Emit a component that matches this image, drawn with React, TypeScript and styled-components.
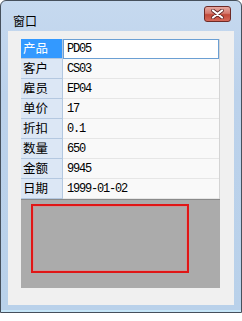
import React from 'react';
import styled, { createGlobalStyle } from 'styled-components';

const Global = createGlobalStyle`
  html, body { margin: 0; padding: 0; background: #ffffff; }
  body { font-family: "Noto Sans CJK SC", sans-serif; }
`;

const Window = styled.div`
  width: 242px;
  height: 313px;
  box-sizing: border-box;
  border: 1px solid #46505c;
  border-radius: 6px 6px 0 0;
  background: linear-gradient(to bottom, #c6d9ef 0%, #bcd2eb 30%, #b9d1ea 100%);
  display: flex;
  flex-direction: column;
  padding: 0 7px 7px 7px;
  box-shadow: inset 0 -2px 0 #c6e6f8;
`;

const TitleBar = styled.div`
  height: 30px;
  display: flex;
  align-items: flex-start;
  justify-content: space-between;
`;

const Title = styled.span`
  margin: 12px 0 0 5px;
  font-size: 12px;
  line-height: 15px;
  color: #000;
  font-family: "Noto Sans CJK SC", sans-serif;
`;

const CloseButton = styled.div`
  margin: 5px 3px 0 0;
  width: 27px;
  height: 16px;
  box-sizing: border-box;
  border: 1px solid #6e2a26;
  border-radius: 3px;
  background: linear-gradient(to bottom, #e6a8a0 0%, #d57a6f 45%, #c24a3a 55%, #d5695a 100%);
  display: flex;
  align-items: center;
  justify-content: center;
`;

const Client = styled.div`
  flex: 1;
  background: #f0f0f0;
  padding: 8px 0 17px 13px;
  display: flex;
  flex-direction: column;
`;

const Grid = styled.div`
  width: 199px;
  display: grid;
  grid-template-columns: 42px 1fr;
  border-right: 1px solid #d4d4d4;
  box-sizing: border-box;
`;

const Label = styled.div<{ $selected?: boolean }>`
  height: 20px;
  box-sizing: border-box;
  border-bottom: 1px solid #b4c8e0;
  border-right: 1px solid #b4c8e0;
  background: ${(p) => (p.$selected ? '#3399ff' : '#dce7f5')};
  color: ${(p) => (p.$selected ? '#ffffff' : '#000000')};
  font-size: 12.5px;
  line-height: 17px;
  padding-left: 2px;
  font-family: "Noto Sans CJK SC", sans-serif;
`;

const Value = styled.div<{ $editing?: boolean }>`
  height: 20px;
  box-sizing: border-box;
  border-bottom: 1px solid ${(p) => (p.$editing ? '#6b9fd3' : '#e6e6e6')};
  border-top: ${(p) => (p.$editing ? '1px solid #6b9fd3' : 'none')};
  border-left: ${(p) => (p.$editing ? '1px solid #6b9fd3' : 'none')};
  border-right: ${(p) => (p.$editing ? '1px solid #6b9fd3' : 'none')};
  background: ${(p) => (p.$editing ? '#ffffff' : '#f9f9f9')};
  font-family: "Liberation Mono", monospace;
  font-size: 12px;
  letter-spacing: -1.2px;
  line-height: ${(p) => (p.$editing ? '18px' : '20px')};
  padding-left: ${(p) => (p.$editing ? '3px' : '4px')};
  color: #000;
`;

const Canvas = styled.div`
  width: 199px;
  height: 89px;
  box-sizing: border-box;
  background: #ababab;
  border-top: 1px solid #8a8a8a;
  padding: 4px 0 0 10px;
`;

const RedBox = styled.div`
  width: 158px;
  height: 69px;
  box-sizing: border-box;
  border: 2px solid #e01616;
  box-shadow: inset 0 0 0 1px rgba(240, 120, 120, 0.35);
`;

const rows: [string, string][] = [
  ['产品', 'PD05'],
  ['客户', 'CS03'],
  ['雇员', 'EP04'],
  ['单价', '17'],
  ['折扣', '0.1'],
  ['数量', '650'],
  ['金额', '9945'],
  ['日期', '1999-01-02'],
];

export default function App() {
  return (
    <>
      <Global />
      <Window>
        <TitleBar>
          <Title>窗口</Title>
          <CloseButton>
            <svg width="13" height="10" viewBox="0 0 13 10">
              <path d="M2 1.5 L11 8.5 M11 1.5 L2 8.5" stroke="#5a2020" strokeWidth="3.6" strokeLinecap="round" />
              <path d="M2 1.5 L11 8.5 M11 1.5 L2 8.5" stroke="#ffffff" strokeWidth="2.2" strokeLinecap="round" />
            </svg>
          </CloseButton>
        </TitleBar>
        <Client>
          <Grid>
            {rows.map(([k, v], i) => (
              <React.Fragment key={k}>
                <Label $selected={i === 0}>{k}</Label>
                <Value $editing={i === 0}>{v}</Value>
              </React.Fragment>
            ))}
          </Grid>
          <Canvas>
            <RedBox />
          </Canvas>
        </Client>
      </Window>
    </>
  );
}
